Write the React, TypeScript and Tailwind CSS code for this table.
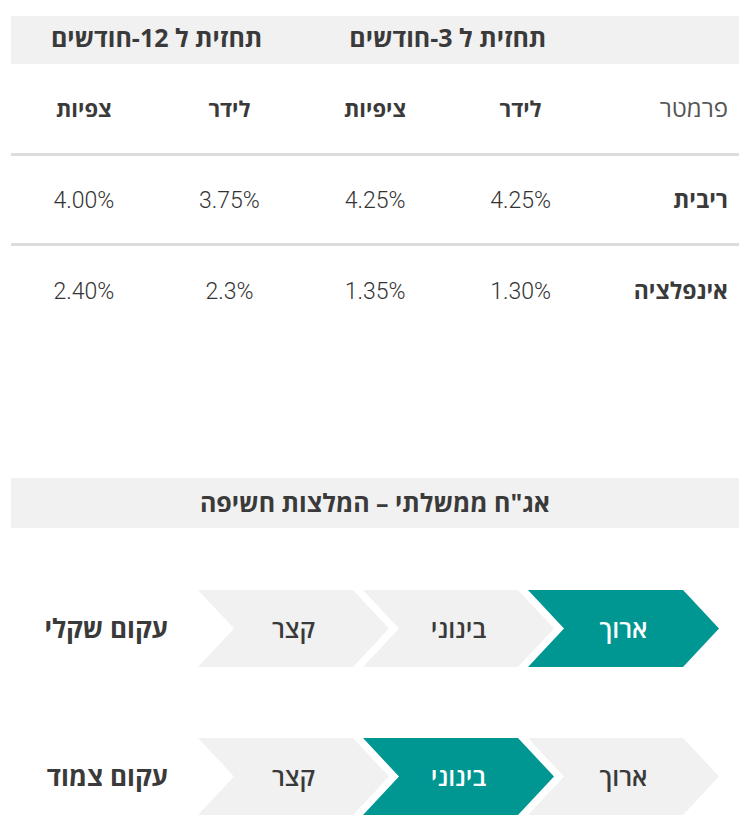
import { Fragment } from 'react';

const rows = [
  { name: 'ריבית', values: ['4.25%', '4.25%', '3.75%', '4.00%'] },
  { name: 'אינפלציה', values: ['1.30%', '1.35%', '2.3%', '2.40%'] },
];

const curves = [
  { name: 'עקום שקלי', active: 'ארוך' },
  { name: 'עקום צמוד', active: 'בינוני' },
];

const steps = ['ארוך', 'בינוני', 'קצר'];

function Chevron({ label, active }: { label: string; active: boolean }) {
  return (
    <div
      className={`-mr-[26px] flex h-[77px] w-[191px] items-center justify-center text-[25px] font-semibold [clip-path:polygon(0_0,calc(100%-36px)_0,100%_50%,calc(100%-36px)_100%,0_100%,36px_50%)] first:mr-0 ${
        active ? 'bg-[#009691] text-white' : 'bg-[#f1f1f1] text-[#3a3a3a]'
      }`}
    >
      {label}
    </div>
  );
}

export default function App() {
  return (
    <div
      dir="rtl"
      className="min-h-[830px] w-[750px] bg-white px-[11px] pt-4 font-['Open_Sans','Liberation_Sans',sans-serif] text-[#3a3a3a]"
    >
      <table className="w-full table-fixed border-collapse">
        <thead>
          <tr className="h-12 bg-[#f1f1f1] text-[25px] font-bold">
            <th className="pb-1" />
            <th colSpan={2} className="pb-1">
              תחזית ל 3-חודשים
            </th>
            <th colSpan={2} className="pb-1">
              תחזית ל 12-חודשים
            </th>
          </tr>
          <tr className="h-[90px] border-b-[3px] border-[#dcdcdc] text-[22px]">
            <th className="pr-[11px] text-right text-[24px] font-normal text-[#555]">פרמטר</th>
            <th className="font-bold">לידר</th>
            <th className="font-bold">ציפיות</th>
            <th className="font-bold">לידר</th>
            <th className="font-bold">צפיות</th>
          </tr>
        </thead>
        <tbody>
          {rows.map((r, i) => (
            <tr
              key={r.name}
              className={`h-[90px] ${i < rows.length - 1 ? 'border-b-[3px] border-[#dcdcdc]' : ''}`}
            >
              <td className="pr-[11px] text-right text-[23px] font-bold">{r.name}</td>
              {r.values.map((v, j) => (
                <Fragment key={j}>
                  <td className="pt-1 text-center font-['Roboto',sans-serif] text-[23px] font-light text-[#333]">
                    <span dir="ltr">{v}</span>
                  </td>
                </Fragment>
              ))}
            </tr>
          ))}
        </tbody>
      </table>

      <div className="mt-[144px] flex h-[50px] items-center justify-center bg-[#f1f1f1] text-[25px] font-bold">
        אג"ח ממשלתי – המלצות חשיפה
      </div>

      <div className="mt-[62px] flex flex-col gap-[71px]">
        {curves.map((c) => (
          <div key={c.name} className="flex items-center pr-5">
            {steps.map((s) => (
              <Chevron key={s} label={s} active={s === c.active} />
            ))}
            <div className="mr-[30px] text-[26px] font-bold">{c.name}</div>
          </div>
        ))}
      </div>
    </div>
  );
}
